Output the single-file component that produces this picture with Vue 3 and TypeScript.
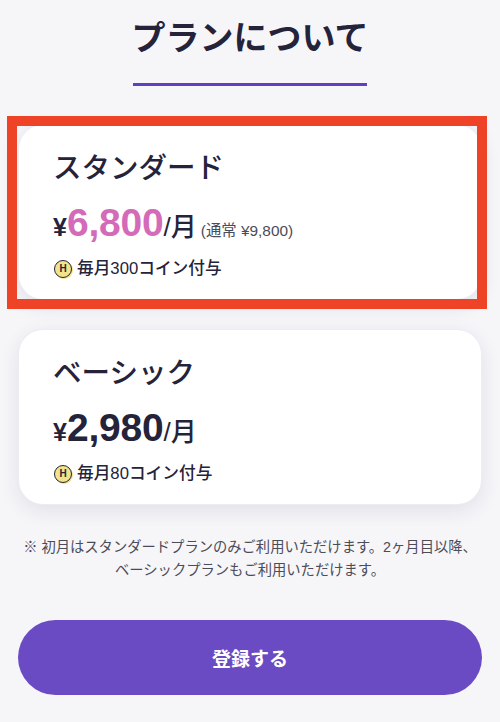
<script setup lang="ts">
interface Plan {
  name: string
  price: string
  coins: string
  regular?: string
  featured?: boolean
}

const plans: Plan[] = [
  { name: 'スタンダード', price: '6,800', coins: '毎月300コイン付与', regular: '(通常 ¥9,800)', featured: true },
  { name: 'ベーシック', price: '2,980', coins: '毎月80コイン付与' },
]
</script>

<template>
  <main class="page">
    <h1 class="title">プランについて</h1>
    <div class="rule"></div>
    <section class="plans">
      <article v-for="plan in plans" :key="plan.name" class="card">
        <h2 class="name">{{ plan.name }}</h2>
        <p class="price-row">
          <span class="yen">¥</span><span class="amount" :class="{ pink: plan.featured }">{{ plan.price }}</span><span class="unit">/月</span>
          <span v-if="plan.regular" class="regular">{{ plan.regular }}</span>
        </p>
        <p class="coins">
          <span class="coin">H</span>
          <span>{{ plan.coins }}</span>
        </p>
        <div v-if="plan.featured" class="highlight"></div>
      </article>
    </section>
    <p class="note">※ 初月はスタンダードプランのみご利用いただけます。2ヶ月目以降、<br />ベーシックプランもご利用いただけます。</p>
    <button class="cta" type="button">登録する</button>
  </main>
</template>

<style>
html, body { margin: 0; background: #f6f6f9; }
</style>

<style scoped>
.page {
  box-sizing: border-box;
  height: 722px;
  overflow: hidden;
  padding: 14px 18px 0;
  display: flex;
  flex-direction: column;
  align-items: center;
  background: #f6f6f9;
  color: #25233a;
  font-family: "Liberation Sans", "Noto Sans CJK JP", sans-serif;
}
.title {
  margin: 0;
  font-size: 34px;
  line-height: 48px;
  font-weight: 700;
}
.rule {
  width: 234px;
  height: 3px;
  margin-top: 21px;
  background: #5f40c2;
}
.plans {
  width: 462px;
  margin-top: 39px;
  display: flex;
  flex-direction: column;
  gap: 31px;
}
.card {
  position: relative;
  box-sizing: border-box;
  height: 174px;
  padding: 23px 34px 0;
  background: #fff;
  border-radius: 24px;
  box-shadow: 0 0 0 1px #ececf2, 0 6px 20px rgba(40, 40, 80, 0.11);
}
.name {
  margin: 0;
  font-size: 28.5px;
  line-height: 40px;
  font-weight: 500;
}
.price-row {
  margin: 12px 0 0;
  height: 46px;
  display: flex;
  align-items: baseline;
  line-height: 46px;
}
.yen { font-size: 25px; font-weight: 700; }
.amount { font-size: 39px; font-weight: 700; letter-spacing: -0.2px; }
.pink { color: #d46bb9; }
.unit { font-size: 26px; font-weight: 500; }
.regular { margin-left: 4px; font-size: 15.4px; color: #4c4b58; }
.coins {
  margin: 11px 0 0;
  display: flex;
  align-items: center;
  gap: 5px;
  font-size: 16.7px;
  line-height: 24px;
  font-weight: 500;
}
.coin {
  box-sizing: border-box;
  width: 18px;
  height: 18px;
  margin-left: 1px;
  display: flex;
  align-items: center;
  justify-content: center;
  border: 1px solid #25233a;
  border-radius: 50%;
  background: #f2e38a;
  box-shadow: 1px 1px 0 #f2e38a;
  font-size: 10px;
  font-weight: 700;
}
.highlight {
  position: absolute;
  left: -12px;
  top: -9px;
  width: 460px;
  height: 173px;
  border: 10px solid #ee4326;
  pointer-events: none;
}
.note {
  margin: 32px 0 0;
  font-size: 14.3px;
  line-height: 23px;
  text-align: center;
  color: #4c4b58;
  white-space: nowrap;
}
.cta {
  width: 464px;
  height: 75px;
  margin-top: 38px;
  flex-shrink: 0;
  border: 0;
  border-radius: 38px;
  background: #6a4bc4;
  color: #fff;
  font-family: inherit;
  font-size: 19px;
  font-weight: 700;
}
</style>
